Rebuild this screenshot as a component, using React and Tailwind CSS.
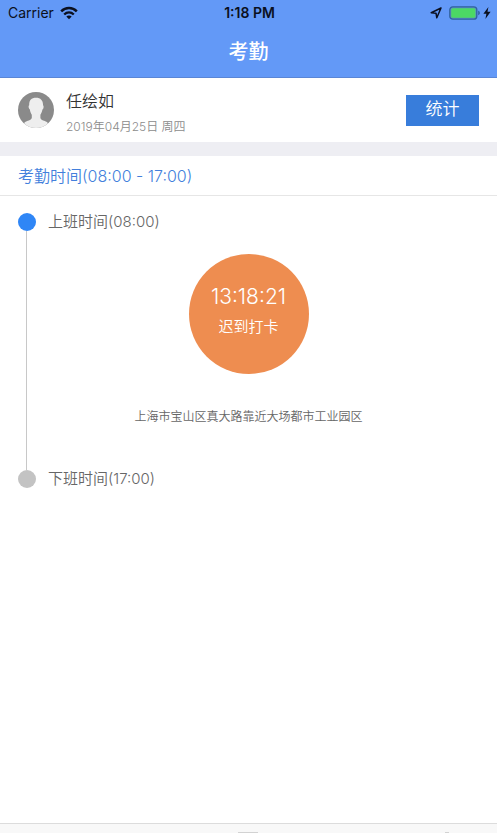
function WifiIcon() {
  return (
    <svg viewBox="0 0 18 14" className="h-[14px] w-[18px]" fill="none" stroke="#0b1020" aria-hidden="true">
      <path d="M1.2 5.4C5.6 1 12.4 1 16.8 5.4" strokeWidth="2.5" />
      <path d="M4.2 8.5C7 5.8 11 5.8 13.8 8.5" strokeWidth="2.3" />
      <path d="M9 13.2 6.3 10.5C7.8 9.1 10.2 9.1 11.7 10.5Z" fill="#0b1020" stroke="none" />
    </svg>
  );
}

function LocationIcon() {
  return (
    <svg viewBox="0 0 12 12" className="size-[12px]" fill="none" stroke="#0b1020" strokeWidth="1.5" strokeLinejoin="round" aria-hidden="true">
      <path d="M11 1 1.2 5.7 6 6.2 6.8 10.8Z" />
    </svg>
  );
}

function BatteryIcon() {
  return (
    <svg viewBox="0 0 32 14" className="h-[14px] w-[32px]" aria-hidden="true">
      <rect x="0.8" y="0.8" width="27" height="12.4" rx="3" fill="#5d93c4" stroke="#31629f" strokeWidth="1.3" />
      <rect x="2.2" y="2.2" width="24.2" height="9.6" rx="1.6" fill="#4cd964" />
      <path d="M29.2 4.8C31.4 5.4 31.4 8.6 29.2 9.2Z" fill="#31629f" />
    </svg>
  );
}

function BoltIcon() {
  return (
    <svg viewBox="0 0 8 12" className="h-[12px] w-[8px]" fill="#0b1020" aria-hidden="true">
      <path d="M5.4 0 0.4 6.8H3.4L2.4 12 7.6 4.8H4.5Z" />
    </svg>
  );
}

function Avatar() {
  return (
    <svg viewBox="0 0 36 36" className="size-9 shrink-0" role="img" aria-label="任绘如">
      <clipPath id="avatar-clip">
        <circle cx="18" cy="18" r="18" />
      </clipPath>
      <g clipPath="url(#avatar-clip)">
        <rect width="36" height="36" fill="#8a8a8a" />
        <path
          d="M18 5.7C22.8 5.7 25.2 8.6 25 13.2C26 13.3 25.7 17 24.4 17.6C24.1 20 23.1 21.6 22.4 22.8V26C23 28.4 26.6 28.6 29.5 30.5L31 37H5L6.5 30.5C9.4 28.6 13 28.4 13.8 26V22.8C13 21.6 12.2 20 11.9 17.6C10.5 17 10.2 13.3 11.2 13.2C11 8.6 13.2 5.7 18 5.7Z"
          fill="#eeeeee"
        />
      </g>
    </svg>
  );
}

export default function App() {
  return (
    <div className="flex min-h-screen flex-col bg-white font-['Inter','Noto_Sans_CJK_SC',sans-serif] font-[350] text-[#666]">
      <header className="border-b border-[#5a86d6] bg-[#6399f7]">
        <div className="grid h-[26px] grid-cols-3 items-center pr-[6px] pl-2 text-sm font-normal text-[#0b1020]">
          <div className="flex items-center gap-[6px]">
            <span>Carrier</span>
            <WifiIcon />
          </div>
          <time className="text-center font-semibold">1:18 PM</time>
          <div className="flex items-center justify-end">
            <LocationIcon />
            <span className="w-[7px]" />
            <BatteryIcon />
            <span className="w-[2px]" />
            <BoltIcon />
          </div>
        </div>
        <h1 className="flex h-[51px] items-center justify-center text-xl font-medium text-white">考勤</h1>
      </header>

      <main className="flex flex-1 flex-col">
        <section className="flex h-16 items-center gap-3 px-[18px]">
          <Avatar />
          <div className="flex-1 pt-[6px]">
            <h2 className="text-base leading-6 text-[#333]">任绘如</h2>
            <p className="pt-1 text-xs leading-5 text-[#8c8c8c]">2019年04月25日 周四</p>
          </div>
          <button type="button" className="h-[31px] w-[73px] bg-[#387ddb] text-[17px] text-white">统计</button>
        </section>

        <h2 className="flex h-[54px] items-center border-t-[14px] border-b border-t-[#eeeef3] border-b-[#e6e6e6] px-[18px] text-base text-[#437fdc]">
          考勤时间(08:00 - 17:00)
        </h2>

        <section className="px-[18px] pt-4">
          <div className="flex h-5 items-center gap-3 text-[15px]">
            <span className="size-[18px] rounded-full bg-[#2f86f6]" />
            <h3>上班时间(08:00)</h3>
          </div>
          <div className="flex h-[237px]">
            <div className="-my-px ml-2 w-px bg-[#c8c8c8]" />
            <div className="flex flex-1 flex-col items-center pt-[22px] pr-[9px]">
              <button type="button" className="flex size-[120px] flex-col items-center rounded-full bg-[#ee8d50] pt-[29px] text-white">
                <span className="text-[21px] leading-7">13:18:21</span>
                <span className="pt-1 text-[15px] leading-6">迟到打卡</span>
              </button>
              <p className="pt-[33px] text-xs leading-5">上海市宝山区真大路靠近大场都市工业园区</p>
            </div>
          </div>
          <div className="flex h-5 items-center gap-3 text-[15px]">
            <span className="size-[18px] rounded-full bg-[#c3c3c3]" />
            <h3>下班时间(17:00)</h3>
          </div>
        </section>
      </main>

      <footer className="grid h-[10px] grid-cols-5 items-end justify-items-center border-t border-[#dcdcdc] bg-[#f8f8f8]">
        <span className="col-start-3 h-px w-5 bg-[#d2d2d2]" />
        <span className="col-start-5 h-px w-1 bg-[#d2d2d2]" />
      </footer>
    </div>
  );
}
